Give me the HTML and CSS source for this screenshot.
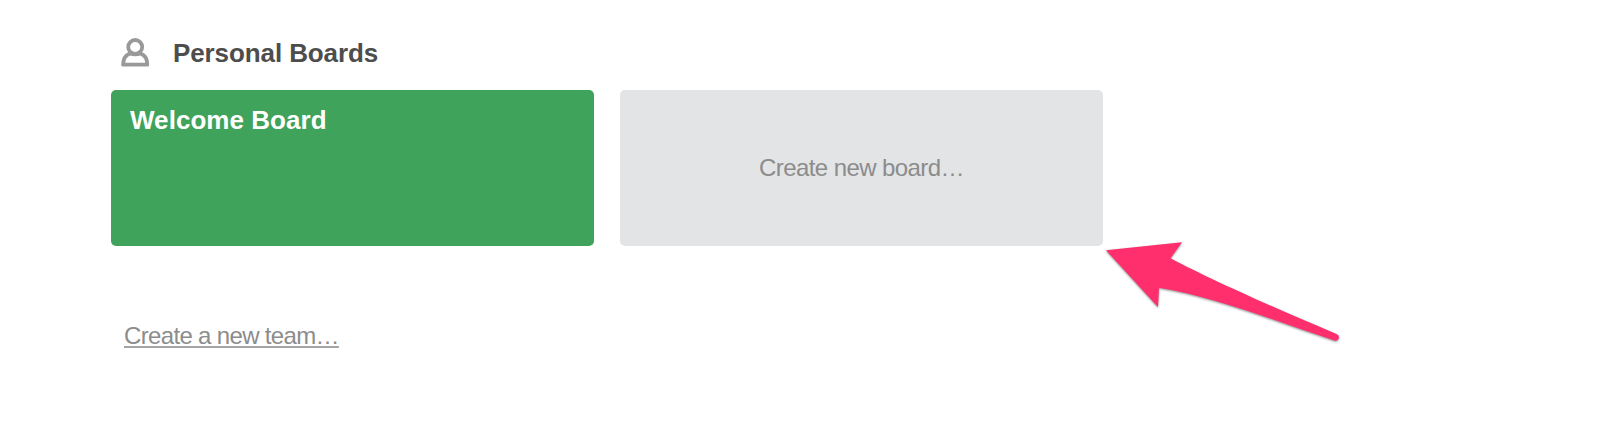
FILE: index.html
```
<!DOCTYPE html>
<html lang="en">
<head>
<meta charset="utf-8">
<title>Boards</title>
<link rel="stylesheet" href="styles.css">
</head>
<body>
<main class="page">
  <header class="section-header">
    <svg class="member-icon" viewBox="0 0 30 31" aria-hidden="true">
      <ellipse cx="15.2" cy="9" rx="7" ry="7"/>
      <path d="M9.8 15.5C5.6 17.2 3.1 21.2 3.1 26.7H27.3C27.3 21.2 24.8 17.2 20.6 15.5Q15.2 17.2 9.8 15.5Z"/>
    </svg>
    <h1 class="section-title"><span class="title-text">Personal Boards</span></h1>
  </header>
  <div class="boards">
    <a class="board"><span class="board-name">Welcome Board</span></a>
    <a class="board board-new"><span class="new-label">Create new board…</span></a>
  </div>
  <a class="new-team"><span class="team-label">Create a new team…</span></a>
</main>
<svg class="arrow" viewBox="0 0 270 130" aria-hidden="true">
  <path d="M16 25.2L92 17.3L80.5 33.2C121 55 190 85 247 109.2Q249.4 110.7 248.8 113.2Q247.8 116.2 244.5 115.5C186 96 122 71 69 62.7L68 82Z"/>
</svg>
</body>
</html>
```
FILE: styles.css
```
body {
  margin: 0;
  background: #fff;
  font-family: "Liberation Sans", Arial, sans-serif;
}
.page {
  box-sizing: border-box;
  width: 1103px;
  height: 424px;
  padding: 36px 0 0 111px;
}
.section-header {
  display: flex;
  height: 54px;
  padding-left: 9px;
}
.member-icon {
  width: 30px;
  height: 31px;
  margin: 2px 23px 0 0;
  fill: none;
  stroke: #999;
  stroke-width: 3.8;
  stroke-linejoin: round;
}
.section-title {
  margin: 2px 0 0;
  color: #4d4d4d;
  font-size: 26px;
  line-height: 30px;
  letter-spacing: -0.1px;
}
.boards {
  display: flex;
  gap: 26px;
}
.board {
  box-sizing: border-box;
  flex: 1;
  height: 156px;
  padding: 15px 19px;
  border-radius: 5px;
  background: #3fa35b;
  color: #fff;
  font-size: 26px;
  font-weight: bold;
  line-height: 30px;
  letter-spacing: 0.05px;
}
.board-new {
  display: flex;
  align-items: center;
  justify-content: center;
  background: #e2e4e6;
  color: #8c8c8c;
  font-size: 24px;
  font-weight: normal;
  letter-spacing: -0.58px;
}
.new-team {
  display: inline-block;
  margin: 75px 0 0 13px;
  color: #8c8c8c;
  font-size: 24px;
  line-height: 30px;
  letter-spacing: -0.66px;
}
.team-label {
  text-decoration: underline;
  text-decoration-color: #a4a4a4;
  text-decoration-thickness: 2px;
  text-underline-offset: 2px;
  text-decoration-skip-ink: none;
}
.arrow {
  position: absolute;
  left: 1090px;
  top: 225px;
  width: 270px;
  height: 130px;
  fill: #ff2e6d;
  filter: drop-shadow(0 1px 1px rgba(0, 0, 0, 0.45));
}
```
